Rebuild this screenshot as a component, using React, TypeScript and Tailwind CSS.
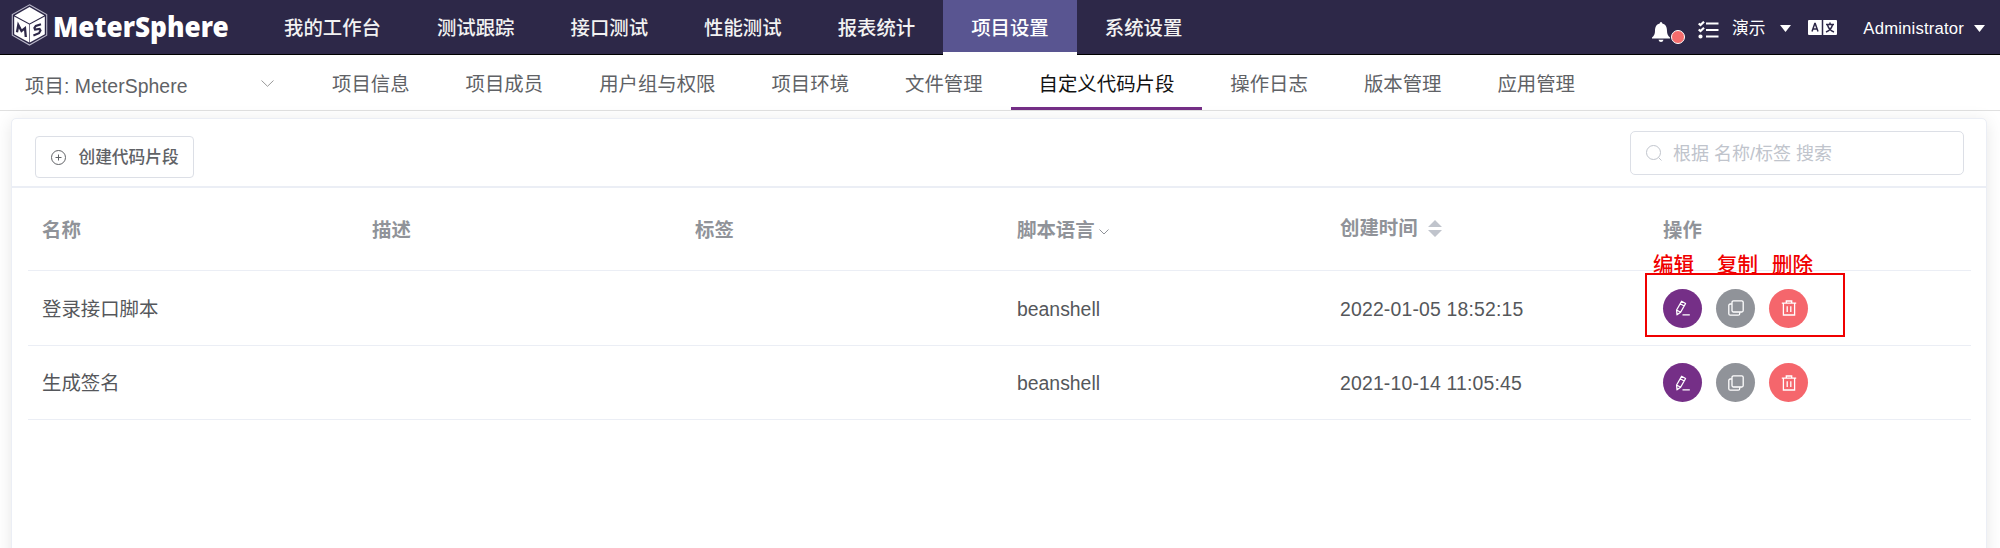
import React from "react";

const navItems = ["我的工作台", "测试跟踪", "接口测试", "性能测试", "报表统计", "项目设置", "系统设置"];
const tabs = ["项目信息", "项目成员", "用户组与权限", "项目环境", "文件管理", "自定义代码片段", "操作日志", "版本管理", "应用管理"];
const rows = [
  { name: "登录接口脚本", lang: "beanshell", time: "2022-01-05 18:52:15" },
  { name: "生成签名", lang: "beanshell", time: "2021-10-14 11:05:45" },
];

function Logo() {
  return (
    <svg className="h-[42px] w-[37px]" viewBox="0 0 37 42">
      <path d="M18.500 .8 35.700 10.500V31.300L18.500 41 1.300 31.300V10.500Z" fill="none" stroke="#b9b7c8" strokeWidth="1.100" />
      <path d="M18.500 3 33.300 11.500 18.500 19.600 3.700 11.500Z" fill="#fff" />
      <path d="M3.200 12.500 18.200 20.600V38.600L3.200 30.200Z" fill="#fff" />
      <path d="M33.800 12.500 18.800 20.600V38.600L33.800 30.200Z" fill="#fff" />
      <path d="M6 28.200 7.300 21 10.500 27 14 24.200 14.800 33" fill="none" stroke="#2d2848" strokeWidth="2.300" />
      <path d="M30 20.200 24.800 22 23.400 24 24 25.600 28.600 25 29.500 26.600 28 29.200 22.400 31.400" fill="none" stroke="#2d2848" strokeWidth="2.100" />
    </svg>
  );
}

function EditIcon() {
  return (
    <svg className="size-[18px]" viewBox="0 0 18 18" fill="none" stroke="#fff" strokeWidth="1.300" strokeLinejoin="round">
      <path d="M2.600 11 7.600 2.300 11.600 4.500 6.600 13.200 3 15.800ZM6.200 4.800 10.200 7M2.600 11 6.600 13.200M8.500 15.800H15.800" />
    </svg>
  );
}
function CopyIcon() {
  return (
    <svg className="size-[18px]" viewBox="0 0 18 18" fill="none" stroke="#fff" strokeWidth="1.300">
      <rect x="5" y="1.800" width="11.200" height="11.200" rx="1.500" />
      <path d="M4.800 5H3.300Q1.800 5 1.800 6.500V14.700Q1.800 16.200 3.300 16.200H11.200Q12.700 16.200 12.700 14.700V13.300" />
    </svg>
  );
}
function TrashIcon() {
  return (
    <svg className="size-[18px]" viewBox="0 0 18 18" fill="none" stroke="#fff" strokeWidth="1.300">
      <path d="M1.800 4.200H16.200M3.400 4.200V16H14.600V4.200M6.300 4V2H11.700V4M7.200 7.200V13M10.800 7.200V13" />
    </svg>
  );
}

function Caret({ className }: { className?: string }) {
  return (
    <svg className={className} width="11" height="7" viewBox="0 0 11 7">
      <path d="M0 0H11L5.500 7Z" fill="#fff" />
    </svg>
  );
}

export default function App() {
  return (
    <div className="flex h-[548px] w-[2000px] flex-col overflow-hidden bg-white font-['Liberation_Sans','Noto_Sans_CJK_SC',sans-serif] text-[19.4px] whitespace-nowrap text-[#606266]">
      <header className="flex h-[55px] shrink-0 border-b border-black bg-[#2d2848] text-white">
        <div className="flex w-[256px] pt-[4px] pl-[11px]">
          <Logo />
          <span className="mt-px ml-[5px] h-[42px] origin-left scale-x-[0.935] font-['Noto_Sans','Open_Sans',sans-serif] text-[28px] leading-[42px] font-black">
            MeterSphere
          </span>
        </div>
        <nav className="flex">
          {navItems.map((t) =>
            t === "项目设置" ? (
              <div key={t} className="h-[55px] border-b-[3px] border-white bg-[#595591] px-[28px] leading-[57px] font-medium">{t}</div>
            ) : (
              <div key={t} className="px-[28px] leading-[57px] font-medium text-[#f2f2f2]">{t}</div>
            ),
          )}
        </nav>
        <div className="ml-auto flex items-center">
          <svg className="mt-[9px] h-[20px] w-[18px]" viewBox="0 0 18 20" fill="#fff">
            <path d="M9 0Q10.300 0 10.300 1.600C14 2.500 15 5.500 15 9Q15 13 18 15.500V16.500H0V15.500Q3 13 3 9C3 5.500 4 2.500 7.700 1.600Q7.700 0 9 0ZM6.500 17.700H11.500Q11 20 9 20T6.500 17.700Z" />
          </svg>
          <span className="mt-[20px] ml-px size-[14px] rounded-full border border-white bg-[#f56c6c]" />
          <svg className="mt-[6px] ml-[13px] h-[18px] w-[21px]" viewBox="0 0 21 18" fill="none" stroke="#fff" strokeWidth="2.200">
            <path d="M8 2.500H20.500M8 9H20.500M8 15.500H20.500M.7 2.500 2.500 4 6 .7M.7 8.500 2.500 10 6 6.700" />
            <circle cx="2.500" cy="15.500" r="1" />
          </svg>
          <span className="mt-[3px] ml-[13px] text-[16.700px]">演示</span>
          <Caret className="mt-[3px] ml-[15px]" />
          <svg className="mt-px ml-[17px] h-[15px] w-[29px]" viewBox="0 0 29 15">
            <rect width="29" height="15" rx="1" fill="#fff" />
            <path d="M14.500 0V15M4 11.500 6.800 3.500H7.200L10 11.500M5 9H9M18 4.500H26M22 2.500V4.500M19.500 5Q21 10 26 12M24.500 5Q23 10 18 12" fill="none" stroke="#2d2848" strokeWidth="1.500" />
          </svg>
          <span className="mt-[3px] ml-[26px] text-[16.700px] tracking-[0.180px]">Administrator</span>
          <Caret className="mt-[3px] mr-[15px] ml-[10px]" />
        </div>
      </header>
      <div className="flex h-[56px] shrink-0 border-b border-[#e0e0e0]">
        <div className="flex w-[304px] items-center pt-[8px] pl-[25px]">
          <span className="w-[236px] tracking-[0.060px]">项目: MeterSphere</span>
          <svg className="-mt-[6px] h-[7px] w-[13px]" viewBox="0 0 13 7" fill="none" stroke="#999">
            <path d="M.5.500 6.500 6.300 12.500.500" />
          </svg>
        </div>
        {tabs.map((t) =>
          t === "自定义代码片段" ? (
            <div key={t} className="border-b-[3px] border-[#752f87] px-[28px] leading-[58px] text-[#111]">{t}</div>
          ) : (
            <div key={t} className="px-[28px] leading-[58px]">{t}</div>
          ),
        )}
      </div>
      <main className="mt-[7px] ml-[11px] h-[500px] w-[1976px] shrink-0 rounded-[5px] border border-[#ebeef5] bg-white shadow-[0_3px_17px_rgba(0,0,0,0.1)]">
        <div className="flex h-[69px] justify-between border-b-2 border-[#ebeef5] pr-[22px] pl-[23px]">
          <button className="mt-[17px] flex h-[42px] w-[159px] items-center rounded-[4px] border border-[#dcdfe6] pl-[15px] text-[16.700px] font-medium">
            <svg className="size-[15px]" viewBox="0 0 15 15" fill="none" stroke="#606266">
              <path d="M14.500 7.500A7 7 0 1 1 .5 7.500A7 7 0 1 1 14.500 7.500M4.500 7.500H10.500M7.500 4.500V10.500" />
            </svg>
            <span className="mt-[2px] ml-[12.500px]">创建代码片段</span>
          </button>
          <div className="mt-[12px] flex h-[44px] w-[334px] items-center rounded-[5px] border border-[#dcdfe6] pl-[15px] text-[18px] text-[#c0c4cc]">
            <svg className="size-[16px]" viewBox="0 0 16 16" fill="none" stroke="#c0c4cc">
              <circle cx="7.500" cy="7.500" r="7" />
              <path d="M12.500 12.500 15.500 15.500" />
            </svg>
            <span className="mt-[2px] ml-[11px]">根据 名称/标签 搜索</span>
          </div>
        </div>
        <div className="ml-[16px] w-[1943px]">
          <div className="grid h-[83px] grid-cols-[330px_323px_322px_323px_323px_322px] items-center border-b border-[#ebeef5] pt-[3px] font-bold text-[#909399] [&>div]:pl-[14px]">
            <div>名称</div>
            <div>描述</div>
            <div>标签</div>
            <div className="flex items-center">
              脚本语言
              <svg className="mt-[3px] ml-[4px] h-[6px] w-[10px]" viewBox="0 0 10 6" fill="none" stroke="#909399">
                <path d="M.5.500 5 5 9.500.500" />
              </svg>
            </div>
            <div className="-mt-[4px] flex items-center">
              创建时间
              <svg className="ml-[10px] h-[17px] w-[14px]" viewBox="0 0 14 17" fill="#c0c4cc">
                <path d="M0 7 7 0 14 7ZM0 10 7 17 14 10Z" />
              </svg>
            </div>
            <div>操作</div>
          </div>
          {rows.map((r, i) => (
            <div key={r.name} className="grid h-[74.500px] grid-cols-[330px_323px_322px_323px_323px_322px] items-center border-b border-[#ebeef5] text-[#55575b] [&>div]:pl-[14px]">
              <div className="pt-[3px]">{r.name}</div>
              <div />
              <div />
              <div className="pt-[3px]">{r.lang}</div>
              <div className="pt-[3px] tracking-[0.180px]">{r.time}</div>
              <div className="relative flex gap-[14px] pt-px">
                <span className="flex size-[39px] items-center justify-center rounded-full bg-[#752f87]"><EditIcon /></span>
                <span className="flex size-[39px] items-center justify-center rounded-full bg-[#909399]"><CopyIcon /></span>
                <span className="flex size-[39px] items-center justify-center rounded-full bg-[#f5666c]"><TrashIcon /></span>
                {i === 0 && (
                  <div className="absolute -top-[15px] -left-[4px] h-[64px] w-[200px] border-2 border-[#f00000] text-[20.500px] leading-[20px] font-medium text-[#f00000]">
                    <span className="absolute -top-[20px] left-[6px]">编辑</span>
                    <span className="absolute -top-[20px] left-[70px]">复制</span>
                    <span className="absolute -top-[20px] left-[125px]">删除</span>
                  </div>
                )}
              </div>
            </div>
          ))}
        </div>
      </main>
    </div>
  );
}
